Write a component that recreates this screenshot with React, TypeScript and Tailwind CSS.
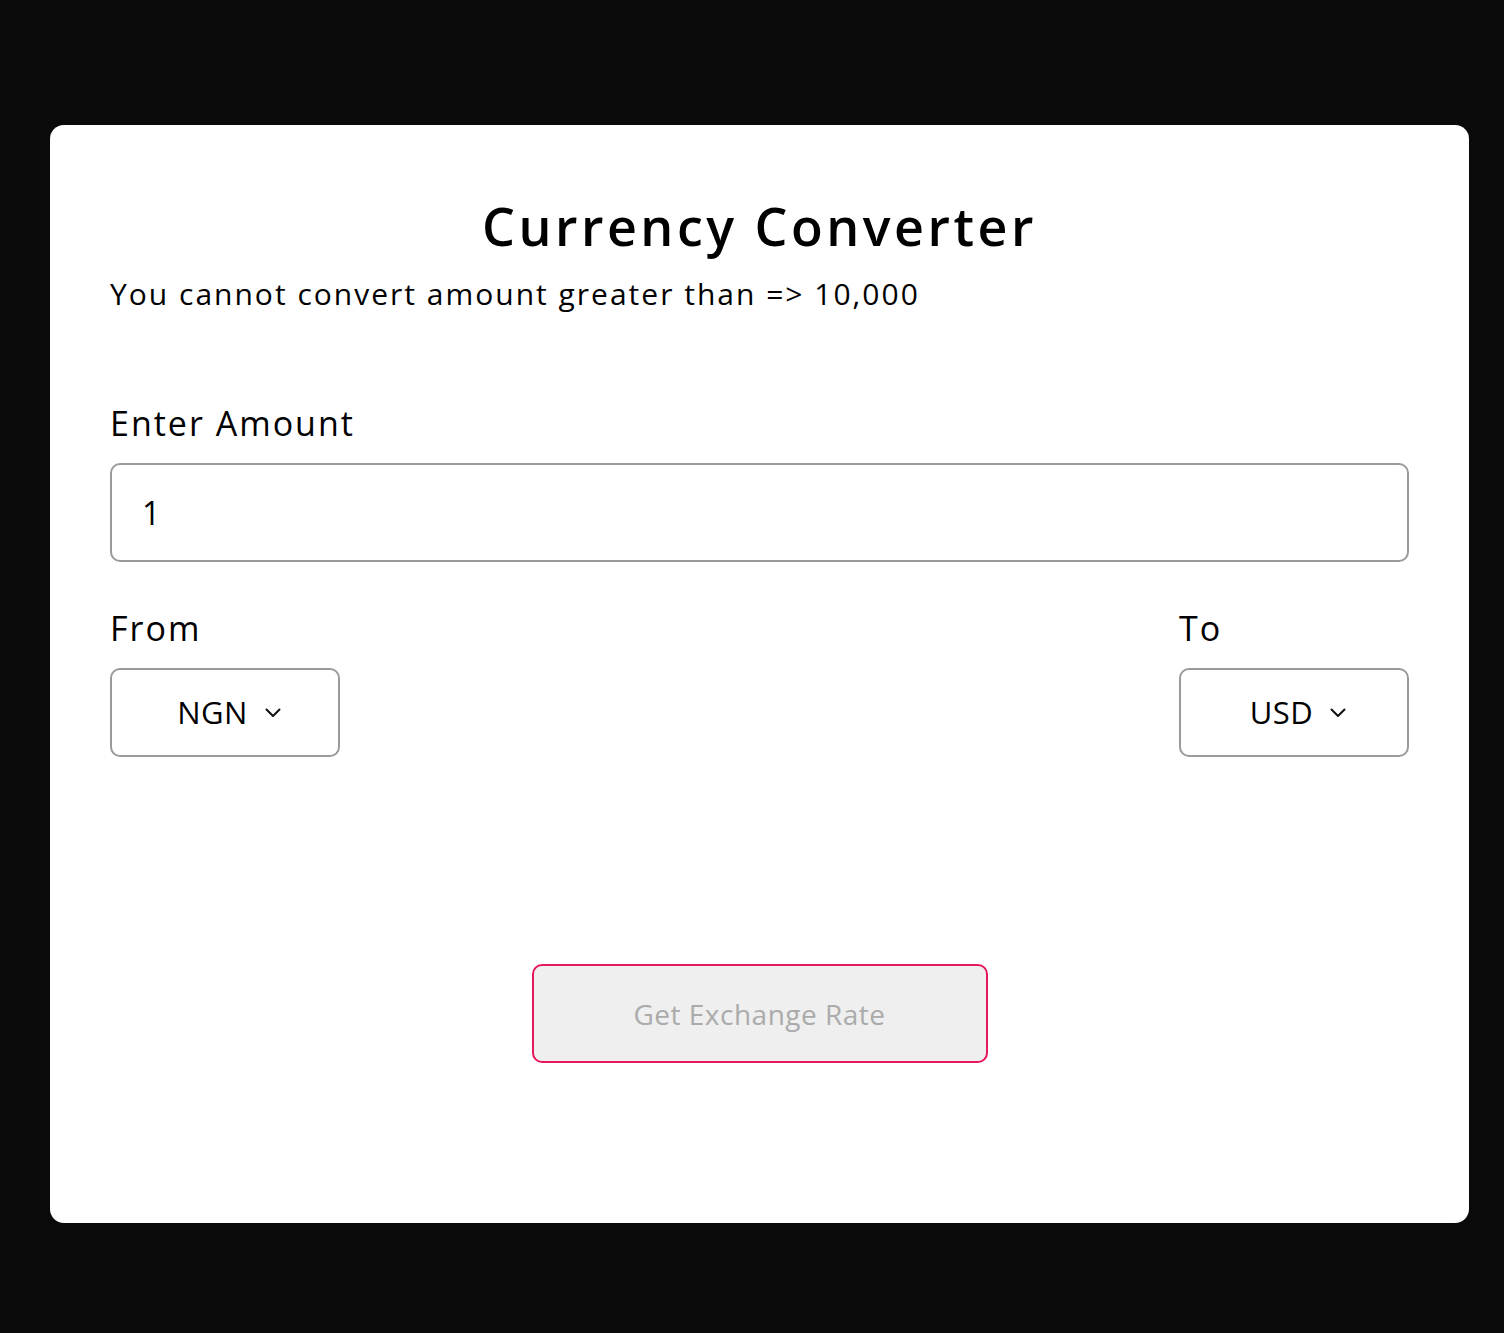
import { useState } from "react";

const font = { fontFamily: '"Open Sans", "Noto Sans", sans-serif' };

function Chevron() {
  return (
    <svg width="16" height="10" viewBox="0 0 16 10" fill="none" className="shrink-0">
      <path d="M1.5 1.5 8 8l6.5-6.5" stroke="#111" strokeWidth="2" strokeLinecap="round" strokeLinejoin="round" />
    </svg>
  );
}

function CurrencySelect({ label, value }: { label: string; value: string }) {
  return (
    <div className="flex flex-col items-start">
      <span className="text-[34px] leading-[48px] tracking-[2px] text-black">{label}</span>
      <div className="mt-[16px] flex h-[89px] w-[230px] items-center justify-center gap-[17px] rounded-[10px] border-2 border-[#9a9a9a] bg-white pl-[8px]">
        <span className="text-[31px] tracking-[0.5px] text-black">{value}</span>
        <Chevron />
      </div>
    </div>
  );
}

export default function App() {
  const [amount, setAmount] = useState("1");

  return (
    <div className="min-h-[1333px] bg-[#0a0a0a] pt-[125px] pr-[35px] pb-[110px] pl-[50px]" style={font}>
      <div className="flex h-[1098px] flex-col rounded-[14px] bg-white px-[60px] pt-[71px]">
        <h1 className="text-center text-[52px] font-semibold leading-[60px] tracking-[3.5px] text-black">
          Currency Converter
        </h1>
        <p className="mt-[16px] text-[30px] leading-[44px] tracking-[2px] text-black">
          You cannot convert amount greater than =&gt; 10,000
        </p>

        <label className="mt-[83px] text-[34px] leading-[48px] tracking-[2px] text-black">Enter Amount</label>
        <input
          value={amount}
          onChange={(e) => setAmount(e.target.value)}
          className="mt-[16px] h-[99px] w-full rounded-[10px] border-2 border-[#9a9a9a] px-[30px] text-[32px] text-black outline-none"
          style={font}
        />

        <div className="mt-[42px] flex justify-between">
          <CurrencySelect label="From" value="NGN" />
          <CurrencySelect label="To" value="USD" />
        </div>

        <div className="mt-[207px] flex justify-center">
          <button
            disabled
            className="h-[99px] w-[456px] rounded-[10px] border-2 border-[#e8185c] bg-[#efefef] text-[28px] tracking-[0.5px] text-[#ababab]"
            style={font}
          >
            Get Exchange Rate
          </button>
        </div>
      </div>
    </div>
  );
}
